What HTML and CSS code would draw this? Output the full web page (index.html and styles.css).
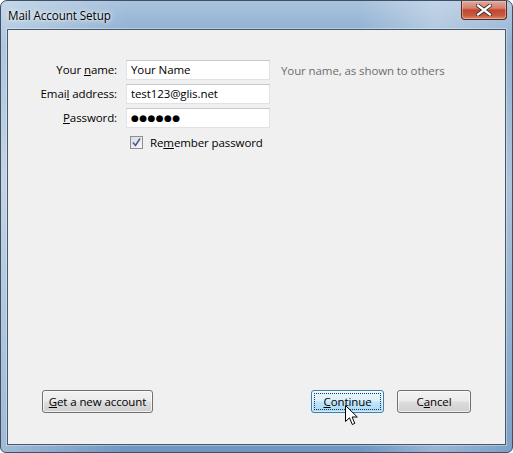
FILE: index.html
```html
<!DOCTYPE html>
<html>
<head>
<meta charset="utf-8">
<link rel="stylesheet" href="styles.css">
</head>
<body>
<div class="window">
  <div class="titlebar">
    <span class="title">Mail Account Setup</span>
    <div class="close">
      <svg width="16" height="12" viewBox="0 0 16 12"><path d="M2 1.5 L14 10.5 M14 1.5 L2 10.5" stroke="#3a2a2a" stroke-width="4" stroke-linecap="square"/><path d="M2 1.5 L14 10.5 M14 1.5 L2 10.5" stroke="#ffffff" stroke-width="2.2" stroke-linecap="square"/></svg>
    </div>
  </div>
  <div class="client">
    <div class="form">
      <label class="lbl">Your <u>n</u>ame:</label>
      <div class="input">Your Name</div>
      <span class="hint">Your name, as shown to others</span>
      <label class="lbl">Emai<u>l</u> address:</label>
      <div class="input">test123@glis.net</div>
      <span></span>
      <label class="lbl"><u>P</u>assword:</label>
      <div class="input dots">●●●●●●</div>
      <span></span>
      <span></span>
      <div class="remember">
        <span class="check"><svg width="9" height="9" viewBox="0 0 9 9"><path d="M1 4.5 L3.5 7.5 L8 0.5" fill="none" stroke="#4a5f97" stroke-width="1.6"/></svg></span>
        <span>Re<u>m</u>ember password</span>
      </div>
    </div>
    <div class="buttons">
      <button class="btn new"><u>G</u>et a new account</button>
      <div class="right">
        <button class="btn primary"><span class="focus"><u>C</u>ontinue</span></button>
        <button class="btn cancel">C<u>a</u>ncel</button>
      </div>
    </div>
  </div>
  <svg class="cursor" width="14" height="22" viewBox="0 0 14 22"><path d="M0.5 0.5 L0.5 16.5 L4.5 12.8 L7.3 19.5 L9.8 18.4 L7.1 12 L12.3 12 Z" fill="#ffffff" stroke="#000000" stroke-width="1"/></svg>
</div>
</body>
</html>
```
FILE: styles.css
```css
html, body {
  margin: 0;
  padding: 0;
  background: #ffffff;
}
body {
  font-family: "Open Sans", "Noto Sans", "DejaVu Sans", sans-serif;
  font-size: 11.5px;
  letter-spacing: -0.1px;
  color: #000;
}
.window {
  position: relative;
  width: 513px;
  height: 453px;
  box-sizing: border-box;
  border: 1px solid #3c5066;
  border-radius: 7px 7px 6px 6px;
  background:
    linear-gradient(90deg, rgba(255,255,255,0.35) 0%, rgba(255,255,255,0) 25%, rgba(255,255,255,0) 70%, rgba(255,255,255,0.3) 85%, rgba(255,255,255,0.1) 100%),
    linear-gradient(180deg, #a9c3dd 0%, #86a9cc 10%, #a4bdd6 40%, #7fa3c9 80%, #6f95c0 100%);
  display: flex;
  flex-direction: column;
  overflow: hidden;
}
.titlebar {
  height: 28px;
  display: flex;
  align-items: flex-start;
  justify-content: space-between;
}
.title {
  margin: 6px 0 0 7px;
  font-size: 11.7px;
  color: #000;
  text-shadow: 0 0 6px rgba(255,255,255,0.9), 0 0 3px rgba(255,255,255,0.9);
}
.close {
  width: 46px;
  height: 19px;
  margin-right: 5px;
  box-sizing: border-box;
  border: 1px solid #5a2a22;
  border-top: none;
  border-radius: 0 0 4px 4px;
  background: linear-gradient(180deg, #e4a79a 0%, #d2806f 40%, #c1452d 50%, #c75a40 80%, #dc8b6e 100%);
  box-shadow: inset 0 0 0 1px rgba(255,210,200,0.45);
  display: flex;
  align-items: center;
  justify-content: center;
}
.client {
  flex: 1;
  margin: 0 6px 7px 6px;
  border: 1px solid #45576a;
  background: #f0f0f0;
  display: flex;
  flex-direction: column;
  justify-content: space-between;
  box-shadow: 0 0 0 1px rgba(255,255,255,0.35);
}
.form {
  display: grid;
  grid-template-columns: 109px 144px auto;
  column-gap: 9px;
  row-gap: 4px;
  margin-top: 30px;
  align-items: center;
}
.lbl {
  text-align: right;
  line-height: 20px;
}
.input {
  height: 20px;
  box-sizing: border-box;
  border: 1px solid #dfe3e8;
  border-top-color: #c5cad1;
  background: #fff;
  padding: 0 4px;
  line-height: 18px;
  white-space: nowrap;
}
.dots {
  font-size: 9px;
  letter-spacing: 0.4px;
  font-family: "DejaVu Sans", sans-serif;
}
.hint {
  margin-left: 2px;
  color: #6d6d6d;
}
.remember {
  grid-column: 2 / span 2;
  display: flex;
  align-items: center;
  gap: 7px;
  margin-top: 3px;
  margin-left: 4px;
}
.check {
  width: 13px;
  height: 13px;
  box-sizing: border-box;
  border: 1px solid #8f8f8f;
  background: linear-gradient(135deg, #dcdcdc, #f8f8f8);
  display: flex;
  align-items: center;
  justify-content: center;
}
.buttons {
  display: flex;
  justify-content: space-between;
  align-items: center;
  padding: 0 34px 31px 34px;
}
.right {
  display: flex;
  gap: 13px;
}
.btn {
  font-family: "Open Sans", "Noto Sans", sans-serif;
  font-size: 11.5px;
  letter-spacing: -0.1px;
  height: 23px;
  box-sizing: border-box;
  border: 1px solid #707070;
  border-radius: 3px;
  background: linear-gradient(180deg, #f2f2f2 0%, #ebebeb 48%, #dddddd 52%, #cfcfcf 100%);
  box-shadow: inset 0 0 0 1px rgba(255,255,255,0.7);
  color: #000;
  padding: 0;
  display: flex;
  align-items: center;
  justify-content: center;
}
.new { width: 111px; }
.primary {
  width: 73px;
  border-color: #3c7fb1;
  background: linear-gradient(180deg, #eaf6fd 0%, #d9f0fc 48%, #bee6fd 52%, #a7d9f5 100%);
  box-shadow: inset 0 0 0 1px rgba(255,255,255,0.5);
  padding: 2px;
}
.focus {
  width: 100%;
  height: 100%;
  box-sizing: border-box;
  border: 1px dotted #333;
  display: flex;
  align-items: center;
  justify-content: center;
}
.cancel { width: 74px; }
.cursor {
  position: absolute;
  left: 344px;
  top: 404px;
}
```
